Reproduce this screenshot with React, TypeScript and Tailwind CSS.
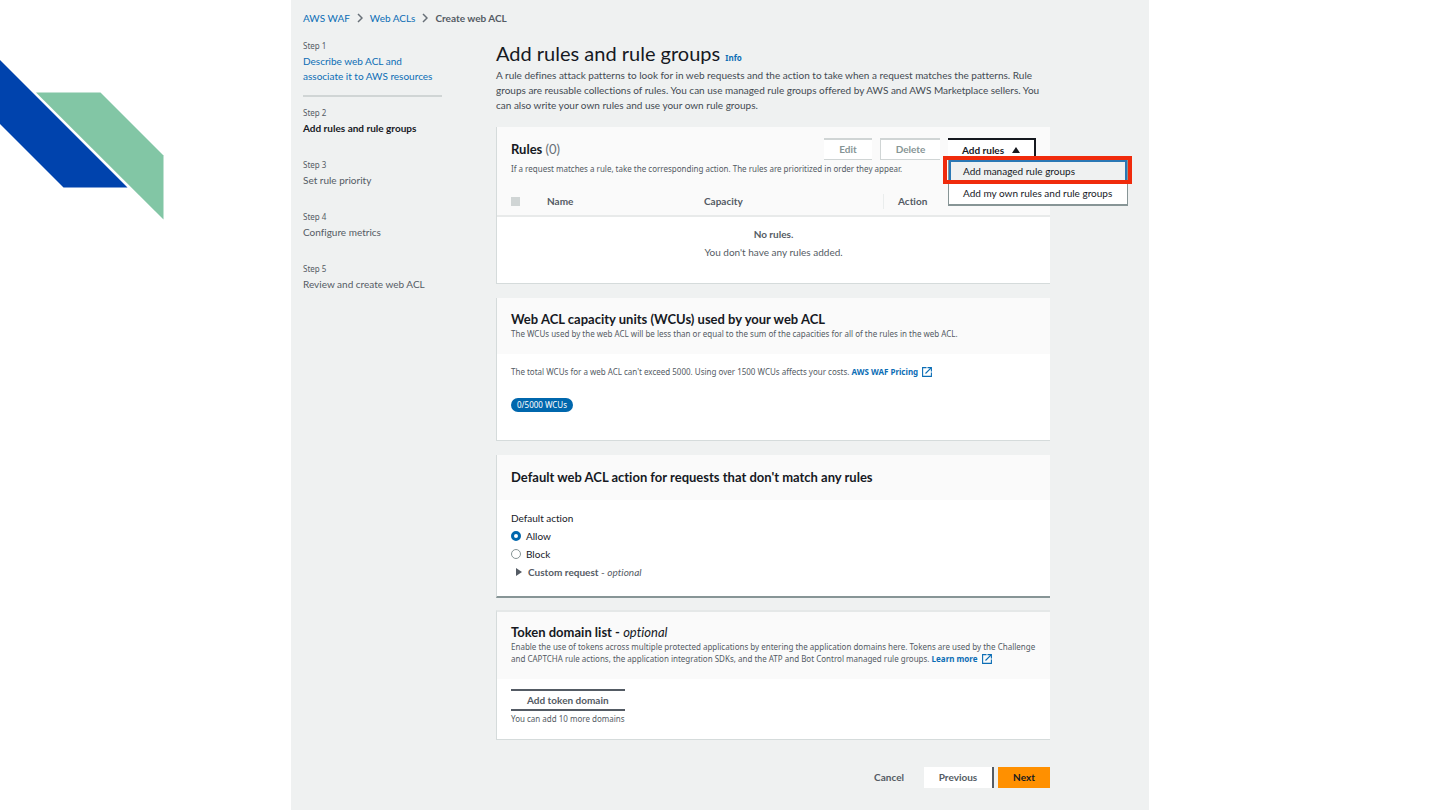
import React from 'react';

const steps = [
  { title: 'Set rule priority', step: 3 },
  { title: 'Configure metrics', step: 4 },
  { title: 'Review and create web ACL', step: 5 },
];

const HINT = "font-['Noto_Sans',sans-serif] text-[8px]";

const Chevron: React.FC = () => (
  <svg width="6" height="10" viewBox="0 0 6 10" fill="none" stroke="#687078" strokeWidth="1.5" aria-hidden="true">
    <path d="M1 1l4 4-4 4" />
  </svg>
);

const ExternalIcon: React.FC = () => (
  <svg className="ml-1 inline-block align-[-2px]" width="10" height="10" viewBox="0 0 10 10" fill="none" stroke="#0b6db5" aria-hidden="true">
    <path d="M4.500 .6H.6v8.800h8.800V5.500M5.500 .6h3.900v3.900M9.400 .6L3.500 6.500" strokeWidth="1.1" />
  </svg>
);

const Decoration: React.FC = () => (
  <svg className="absolute top-0 left-0" width="170" height="230" viewBox="0 0 170 230" aria-hidden="true">
    <path d="M0 60L127.500 187.500H63.500L0 124z" fill="#0043ad" />
    <path d="M36 92.500H100.500L163.500 155.500V219.500z" fill="#82c6a5" />
  </svg>
);

const App: React.FC = () => {
  return (
    <div className="relative min-h-screen bg-white font-['Lato',sans-serif] text-[10px] leading-[15px] text-[#545b64] [font-variant-ligatures:none]">
      <Decoration />
      <div className="relative mx-auto min-h-screen w-full max-w-[858px] bg-[#eff1f1] pt-2.5 pr-[99px] pb-[22px] pl-3">
        <nav aria-label="Breadcrumb" className="flex items-center gap-[7px] leading-4">
          <a href="#waf" className="text-[#0b6db5]">AWS WAF</a>
          <Chevron />
          <a href="#acls" className="text-[#0b6db5]">Web ACLs</a>
          <Chevron />
          <span className="font-bold">Create web ACL</span>
        </nav>

        <div className="mt-3 flex gap-[54px]">
          <ol className="w-[139px] shrink-0">
            <li className="mb-2 border-b-2 border-[#d0d5d5] pb-[11px]">
              <p className={`${HINT} leading-4`}>Step 1</p>
              <a href="#describe" className="block text-[#0b6db5]">
                Describe web ACL and associate it to AWS resources
              </a>
            </li>
            <li className="mb-[21px]">
              <p className={`${HINT} leading-4`}>Step 2</p>
              <p className="font-bold text-[#16191f]">Add rules and rule groups</p>
            </li>
            {steps.map((s) => (
              <li key={s.step} className="mb-[21px]">
                <p className={`${HINT} leading-4`}>Step {s.step}</p>
                <p>{s.title}</p>
              </li>
            ))}
          </ol>

          <main className="min-w-0 flex-1">
            <h1 className="text-xl leading-[30px] text-[#16191f]">
              Add rules and rule groups{' '}
              <a href="#info" className="font-['Noto_Sans',sans-serif] text-[8px] leading-none font-bold text-[#0b6db5]">Info</a>
            </h1>
            <p className="text-[#434a52]">
              A rule defines attack patterns to look for in web requests and the action to take when a request matches
              the patterns. Rule groups are reusable collections of rules. You can use managed rule groups offered by
              AWS and AWS Marketplace sellers. You can also write your own rules and use your own rule groups.
            </p>

            <section className="mt-3.5 border-b border-l border-[#d5dbdb] bg-white">
              <div className="bg-[#fafafa] pt-[11px] pb-[13px] pl-3.5">
                <div className="flex items-center pr-3.5">
                  <h2 className="flex-1 text-[13px] leading-4 font-bold text-[#16191f]">
                    Rules <span className="font-normal text-[#687078]">(0)</span>
                  </h2>
                  <button type="button" disabled className="h-[22px] w-12 border-t-2 border-b border-[#d0d5d5] bg-white font-bold text-[#879596]">
                    Edit
                  </button>
                  <button type="button" disabled className="ml-2 h-[22px] w-[60px] border-t-2 border-b border-l border-[#d0d5d5] bg-white font-bold text-[#879596]">
                    Delete
                  </button>
                  <div className="relative ml-2">
                    <button
                      type="button"
                      aria-expanded="true"
                      aria-haspopup="menu"
                      className="flex h-[22px] w-[88px] items-center justify-center gap-2 border-t-2 border-r-2 border-[#16191f] bg-white font-bold text-[#16191f]"
                    >
                      Add rules
                      <svg width="8" height="6" viewBox="0 0 8 6" fill="#16191f" aria-hidden="true">
                        <path d="M4 0l4 6H0z" />
                      </svg>
                    </button>
                    <div role="menu" className="absolute top-[22px] left-0 z-10 w-[180px] border-x border-b-2 border-[#879596] bg-white text-[#16191f]">
                      <button type="button" role="menuitem" className="block h-[22px] w-full border-2 border-[#2a78b5] bg-[#eff1f1] pl-3 text-left">
                        Add managed rule groups
                      </button>
                      <button type="button" role="menuitem" className="block h-[22px] w-full pl-3.5 text-left">
                        Add my own rules and rule groups
                      </button>
                      <div className="pointer-events-none absolute -top-1 -right-[5px] -left-[6px] h-[28px] border-4 border-[#f02b0c]" />
                    </div>
                  </div>
                </div>
                <p className={`${HINT} mt-[3px] leading-3`}>
                  If a request matches a rule, take the corresponding action. The rules are prioritized in order they appear.
                </p>
              </div>
              <table className="w-full table-fixed text-left">
                <thead className="border-b-2 border-[#e8eaea] bg-[#fafafa]">
                  <tr className="h-7">
                    <th className="w-9 pl-3.5">
                      <input type="checkbox" aria-label="Select all rules" disabled className="block size-[9px] appearance-none bg-[#d0d5d5]" />
                    </th>
                    <th className="w-[157px] pl-3.5">Name</th>
                    <th className="w-[193px] pl-3.5">Capacity</th>
                    <th>
                      <span className="block border-l border-[#eaeded] pl-3.5">Action</span>
                    </th>
                  </tr>
                </thead>
                <tbody>
                  <tr>
                    <td colSpan={4} className="pt-2 pb-[22px] text-center leading-[18px]">
                      <p className="font-bold">No rules.</p>
                      <p>You don't have any rules added.</p>
                    </td>
                  </tr>
                </tbody>
              </table>
            </section>

            <section className="mt-3.5 border-b border-l border-[#d5dbdb] bg-white">
              <div className="bg-[#fafafa] px-3.5 pt-3 pb-3.5">
                <h2 className="text-[13px] leading-[18px] font-bold text-[#16191f]">
                  Web ACL capacity units (WCUs) used by your web ACL
                </h2>
                <p className={`${HINT} leading-3`}>
                  The WCUs used by the web ACL will be less than or equal to the sum of the capacities for all of the
                  rules in the web ACL.
                </p>
              </div>
              <div className={`${HINT} px-3.5 pt-3 pb-7`}>
                <p className="leading-3">
                  The total WCUs for a web ACL can't exceed 5000. Using over 1500 WCUs affects your costs.{' '}
                  <a href="#pricing" className="font-bold text-[#0b6db5]">
                    AWS WAF Pricing
                    <ExternalIcon />
                  </a>
                </p>
                <span className="mt-5 block w-fit rounded-full bg-[#0067ad] px-1.5 leading-[14px] text-white">0/5000 WCUs</span>
              </div>
            </section>

            <section className="mt-3.5 border-b-2 border-l border-b-[#879596] border-l-[#d5dbdb] bg-white">
              <div className="bg-[#fafafa] px-3.5 pt-[13px] pb-3.5">
                <h2 className="text-[13px] leading-[18px] font-bold text-[#16191f]">
                  Default web ACL action for requests that don't match any rules
                </h2>
              </div>
              <fieldset className="px-3.5 pt-[9px] pb-[15px] leading-[18px] text-[#16191f]">
                <legend className="float-left w-full">Default action</legend>
                <label className="clear-both flex items-center gap-[5px]">
                  <input type="radio" name="action" defaultChecked className="size-2.5 appearance-none rounded-full border border-[#879596] bg-white checked:border-[3px] checked:border-[#0067ad]" />
                  Allow
                </label>
                <label className="flex items-center gap-[5px]">
                  <input type="radio" name="action" className="size-2.5 appearance-none rounded-full border border-[#879596] bg-white checked:border-[3px] checked:border-[#0067ad]" />
                  Block
                </label>
                <button type="button" aria-expanded="false" className="flex items-center gap-[6px] pl-[5px] text-[#545b64]">
                  <svg width="6" height="8" viewBox="0 0 6 8" fill="#545b64" aria-hidden="true">
                    <path d="M0 0l6 4-6 4z" />
                  </svg>
                  <span>
                    <b>Custom request</b> - <i>optional</i>
                  </span>
                </button>
              </fieldset>
            </section>

            <section className="mt-3 border-t-2 border-b border-l border-t-[#e5e8e8] border-b-[#d5dbdb] border-l-[#d5dbdb] bg-white">
              <div className="bg-[#fafafa] pt-[11px] pr-2.5 pb-3.5 pl-3.5">
                <h2 className="text-[13px] leading-[18px] font-bold text-[#16191f]">
                  Token domain list - <i className="font-normal">optional</i>
                </h2>
                <p className={`${HINT} leading-3`}>
                  Enable the use of tokens across multiple protected applications by entering the application domains
                  here. Tokens are used by the Challenge and CAPTCHA rule actions, the application integration SDKs,
                  and the ATP and Bot Control managed rule groups.{' '}
                  <a href="#tokens" className="font-bold text-[#0b6db5]">
                    Learn more
                    <ExternalIcon />
                  </a>
                </p>
              </div>
              <div className="px-3.5 pt-2.5 pb-3.5">
                <button type="button" className="block h-[22px] border-y-2 border-[#545b64] px-4 font-bold">
                  Add token domain
                </button>
                <p className={`${HINT} mt-0.5 leading-3`}>You can add 10 more domains</p>
              </div>
            </section>

            <div className="mt-[27px] flex justify-end">
              <button type="button" className="h-[21px] px-5 font-bold">Cancel</button>
              <button type="button" className="h-[21px] w-[70px] border-r-2 border-[#545b64] bg-white font-bold">Previous</button>
              <button type="button" className="ml-1 h-[21px] w-[52px] bg-[#ff9000] font-bold text-[#16191f]">Next</button>
            </div>
          </main>
        </div>
      </div>
    </div>
  );
};

export default App;
